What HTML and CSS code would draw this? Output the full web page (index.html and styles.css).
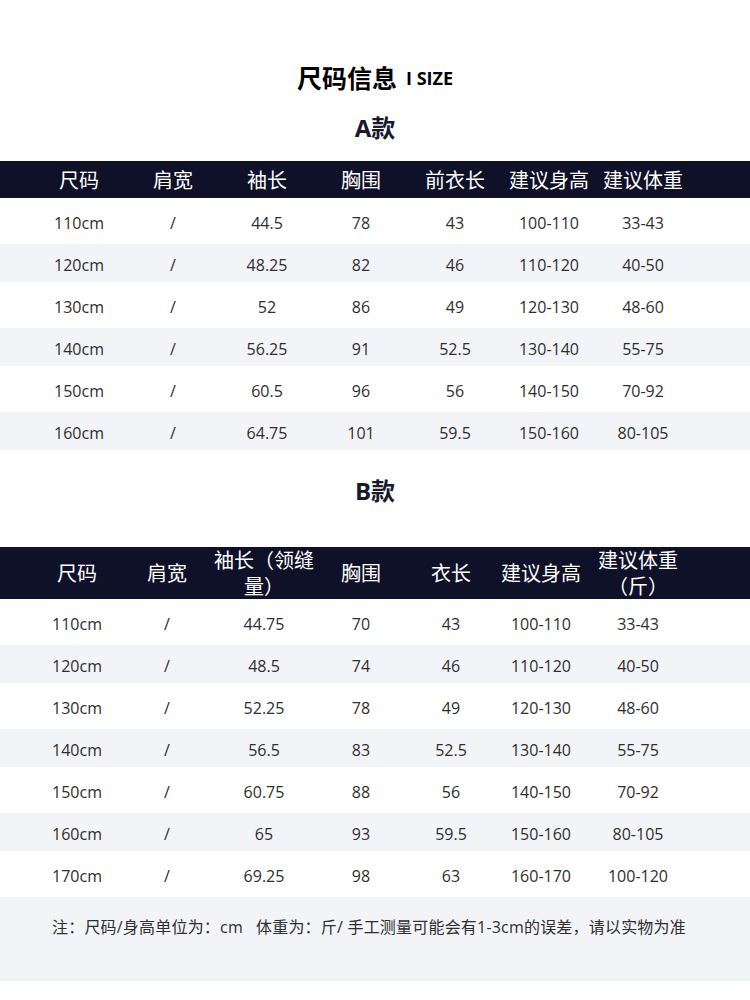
FILE: index.html
```html
<!DOCTYPE html>
<html lang="zh-CN">
<head>
<meta charset="utf-8">
<title>尺码信息</title>
<link rel="stylesheet" href="styles.css">
</head>
<body>
<div class="page">
  <h1 class="title"><span class="title-cn">尺码信息</span><span class="title-en">I SIZE</span></h1>

  <h2 class="section-title section-a">A款</h2>
  <div class="table table-a">
    <div class="row head"><div>尺码</div><div>肩宽</div><div>袖长</div><div>胸围</div><div>前衣长</div><div>建议身高</div><div>建议体重</div></div>
    <div class="row"><div>110cm</div><div>/</div><div>44.5</div><div>78</div><div>43</div><div>100-110</div><div>33-43</div></div>
    <div class="row alt"><div>120cm</div><div>/</div><div>48.25</div><div>82</div><div>46</div><div>110-120</div><div>40-50</div></div>
    <div class="row"><div>130cm</div><div>/</div><div>52</div><div>86</div><div>49</div><div>120-130</div><div>48-60</div></div>
    <div class="row alt"><div>140cm</div><div>/</div><div>56.25</div><div>91</div><div>52.5</div><div>130-140</div><div>55-75</div></div>
    <div class="row"><div>150cm</div><div>/</div><div>60.5</div><div>96</div><div>56</div><div>140-150</div><div>70-92</div></div>
    <div class="row alt"><div>160cm</div><div>/</div><div>64.75</div><div>101</div><div>59.5</div><div>150-160</div><div>80-105</div></div>
  </div>

  <h2 class="section-title section-b">B款</h2>
  <div class="table table-b">
    <div class="row head"><div>尺码</div><div>肩宽</div><div>袖长（领缝<br>量）</div><div>胸围</div><div>衣长</div><div>建议身高</div><div>建议体重<br>（斤）</div></div>
    <div class="row"><div>110cm</div><div>/</div><div>44.75</div><div>70</div><div>43</div><div>100-110</div><div>33-43</div></div>
    <div class="row alt"><div>120cm</div><div>/</div><div>48.5</div><div>74</div><div>46</div><div>110-120</div><div>40-50</div></div>
    <div class="row"><div>130cm</div><div>/</div><div>52.25</div><div>78</div><div>49</div><div>120-130</div><div>48-60</div></div>
    <div class="row alt"><div>140cm</div><div>/</div><div>56.5</div><div>83</div><div>52.5</div><div>130-140</div><div>55-75</div></div>
    <div class="row"><div>150cm</div><div>/</div><div>60.75</div><div>88</div><div>56</div><div>140-150</div><div>70-92</div></div>
    <div class="row alt"><div>160cm</div><div>/</div><div>65</div><div>93</div><div>59.5</div><div>150-160</div><div>80-105</div></div>
    <div class="row"><div>170cm</div><div>/</div><div>69.25</div><div>98</div><div>63</div><div>160-170</div><div>100-120</div></div>
  </div>

  <div class="note">注：尺码/身高单位为：cm&nbsp;&nbsp;&nbsp;体重为：斤/ 手工测量可能会有1-3cm的误差，请以实物为准</div>
</div>
</body>
</html>
```

FILE: styles.css
```css
html, body {
  margin: 0;
  padding: 0;
  background: #ffffff;
}

body {
  font-family: "Open Sans", "Noto Sans CJK SC", sans-serif;
  color: #2e2e2e;
  text-spacing-trim: space-all;
  font-feature-settings: "chws" 0, "halt" 0, "palt" 0;
}

.page {
  width: 750px;
  padding-top: 60px;
}

.title {
  margin: 0;
  height: 34px;
  display: flex;
  justify-content: center;
  align-items: center;
  color: #000000;
  font-weight: 700;
}

.title-cn {
  font-family: "Noto Sans CJK SC", sans-serif;
  font-size: 25px;
  line-height: 34px;
}

.title-en {
  font-family: "Open Sans", sans-serif;
  font-size: 18px;
  line-height: 34px;
  margin-left: 9px;
  padding-top: 1px;
}

.section-title {
  margin: 0;
  text-align: center;
  font-family: "Open Sans", "Noto Sans CJK SC", sans-serif;
  font-weight: 700;
  font-size: 24px;
  line-height: 30px;
  color: #171a2c;
}

.section-a {
  margin-top: 19px;
  margin-bottom: 18px;
}

.section-b {
  margin-top: 26px;
  margin-bottom: 41px;
}

.row {
  display: grid;
  box-sizing: border-box;
  padding-left: 32px;
  padding-top: 4px;
  height: 46px;
  align-items: center;
  font-size: 16px;
  color: #2e2e2e;
}

.row > div {
  text-align: center;
  white-space: nowrap;
}

.row.alt {
  height: 38px;
  background: #f3f4f8;
}

.row.head {
  background: #0f1129;
  color: #ffffff;
  font-family: "Noto Sans CJK SC", sans-serif;
  font-size: 20px;
  height: 37px;
  padding-top: 0;
  line-height: 26px;
}

.table-a .row {
  grid-template-columns: repeat(7, 94px);
}

.table-b .row {
  grid-template-columns: 90px 90px 104px 90px 90px 90px 104px;
}

.table-b .row.head {
  height: 52px;
}

.note {
  background: #f3f4f8;
  border-bottom: 2px solid #eef1f8;
  padding: 19px 0 41px 52px;
  font-family: "Open Sans", "Noto Sans CJK SC", sans-serif;
  font-size: 16px;
  line-height: 22px;
  letter-spacing: 0.2px;
  color: #2e2e2e;
}
```
